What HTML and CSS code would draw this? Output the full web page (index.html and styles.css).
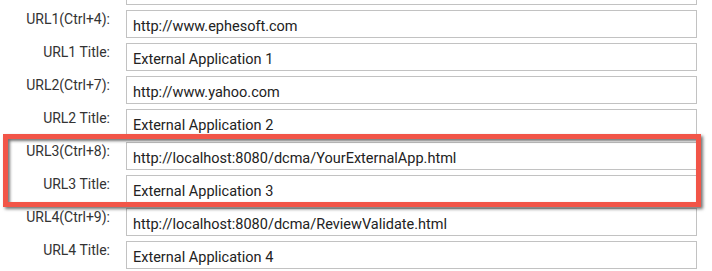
FILE: index.html
```html
<!DOCTYPE html>
<html lang="en">
<head>
  <meta charset="UTF-8">
  <title>External Applications</title>
  <meta name="viewport" content="width=device-width, initial-scale=1">
  <link rel="stylesheet" href="styles.css">
</head>
<body>

  <div class="form-container">
    <form id="urlForm">
      <div class="form-row">
        <span class="label"></span>
        <input type="text" id="url0" value="">
      </div>

      <div class="form-row">
        <label for="url1">URL1(Ctrl+4):</label>
        <input type="text" id="url1" value="http://www.ephesoft.com">
      </div>

      <div class="form-row">
        <label for="title1">URL1 Title:</label>
        <input type="text" id="title1" value="External Application 1">
      </div>

      <div class="form-row">
        <label for="url2">URL2(Ctrl+7):</label>
        <input type="text" id="url2" value="http://www.yahoo.com">
      </div>

      <div class="form-row">
        <label for="title2">URL2 Title:</label>
        <input type="text" id="title2" value="External Application 2">
      </div>

      <div class="highlight-group">
        <div class="form-row">
          <label for="url3">URL3(Ctrl+8):</label>
          <input type="text" id="url3" value="http://localhost:8080/dcma/YourExternalApp.html">
        </div>

        <div class="form-row">
          <label for="title3">URL3 Title:</label>
          <input type="text" id="title3" value="External Application 3">
        </div>

        <div class="highlight-box"></div>
      </div>

      <div class="form-row">
        <label for="url4">URL4(Ctrl+9):</label>
        <input type="text" id="url4" value="http://localhost:8080/dcma/ReviewValidate.html">
      </div>

      <div class="form-row">
        <label for="title4">URL4 Title:</label>
        <input type="text" id="title4" value="External Application 4">
      </div>
    </form>
  </div>

</body>
</html>
```

FILE: styles.css
```css
* {
  margin: 0;
  padding: 0;
  box-sizing: border-box;
}

body {
  font-family: 'Roboto', 'Liberation Sans', sans-serif;
  background-color: #fff;
  overflow: hidden;
}

.form-container {
  width: 712px;
  padding: 0 15px 0 0;
  margin-top: -23px;
}

form {
  display: flex;
  flex-direction: column;
  gap: 5px;
}

.highlight-group {
  position: relative;
  display: flex;
  flex-direction: column;
  gap: 5px;
}

.form-row {
  display: grid;
  grid-template-columns: 110px 1fr;
  column-gap: 16px;
  height: 28px;
}

label,
.label {
  display: block;
  text-align: right;
  padding-top: 1px;
  font-size: 14px;
  line-height: 16px;
  color: #333;
  white-space: nowrap;
}

input {
  width: 100%;
  height: 28px;
  padding: 5px 6px 0 6px;
  font-family: 'Roboto', 'Liberation Sans', sans-serif;
  font-size: 14.5px;
  color: #222;
  border: 1px solid #c2c2c2;
  border-radius: 0;
  background: #fff;
  outline: none;
}

.highlight-box {
  position: absolute;
  left: 3px;
  top: -8px;
  width: 698px;
  height: 73px;
  border: 5px solid #f25548;
  box-shadow: 2px 2px 3px rgba(0,0,0,0.55), inset 2px 2px 3px rgba(0,0,0,0.55);
  pointer-events: none;
}
```
